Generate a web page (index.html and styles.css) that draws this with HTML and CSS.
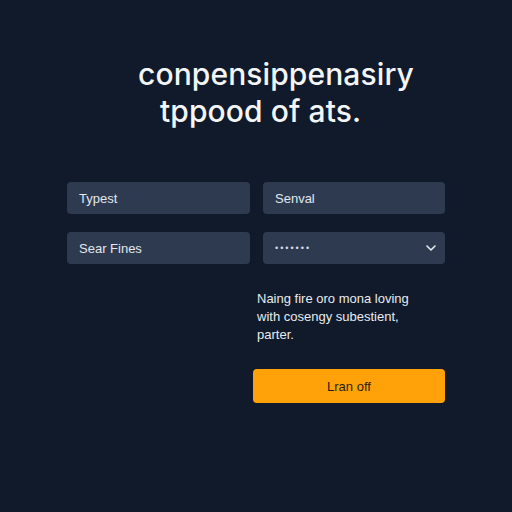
FILE: index.html
```html
<!DOCTYPE html>
<html lang="en">
<head>
  <meta charset="UTF-8" />
  <meta name="viewport" content="width=device-width, initial-scale=1" />
  <title>Sign up</title>
  <link rel="stylesheet" href="styles.css">
</head>
<body>
  <main class="page">
    <h1 class="title">
      <span class="title-line">conpensippenasiry</span>
      <span class="title-line second">tppood of ats.</span>
    </h1>

    <form class="fields">
      <div class="field">Typest</div>
      <div class="field">Senval</div>
      <div class="field">Sear Fines</div>
      <div class="field select">
        <span class="dots">•••••••</span>
        <svg class="chevron" width="10" height="6" viewBox="0 0 10 6">
          <path d="M1 1 L5 5 L9 1" fill="none" stroke="#e8ecf2" stroke-width="1.6" stroke-linecap="round" stroke-linejoin="round"/>
        </svg>
      </div>
    </form>

    <div class="aside">
      <p class="note">Naing fire oro mona loving with cosengy subestient, parter.</p>
      <button class="btn" type="button">Lran off</button>
    </div>
  </main>
</body>
</html>
```

FILE: styles.css
```css
body {
  margin: 0;
  background: #101a2a;
  font-family: "Liberation Sans", Arial, sans-serif;
  color: #e6e9ef;
}

.page {
  width: 512px;
  height: 512px;
  padding: 56px 67px 0;
  box-sizing: border-box;
}

.title {
  margin: 0;
  display: flex;
  flex-direction: column;
  font-family: Inter, "Open Sans", sans-serif;
  font-weight: 500;
  font-size: 30px;
  line-height: 37px;
  letter-spacing: 0.1px;
  color: #f4f5f7;
}

.title-line {
  padding-left: 71px;
}

.title-line.second {
  padding-left: 93px;
}

.fields {
  margin-top: 52px;
  display: grid;
  grid-template-columns: 183px 182px;
  column-gap: 13px;
  row-gap: 18px;
}

.field {
  height: 32px;
  display: flex;
  align-items: center;
  padding: 0 12px;
  background: #2d3a4f;
  border-radius: 4px;
  font-size: 13px;
  color: #e3e7ee;
}

.field.select {
  justify-content: space-between;
  padding-right: 9px;
}

.dots {
  font-size: 9px;
  letter-spacing: 2px;
  color: #d8dde6;
}

.aside {
  margin: 26px 0 0 186px;
  width: 192px;
}

.note {
  margin: 0 0 0 4px;
  width: 172px;
  font-size: 13px;
  line-height: 18px;
  color: #e9ebf0;
}

.btn {
  display: block;
  width: 192px;
  height: 34px;
  margin-top: 25px;
  border: 0;
  border-radius: 4px;
  background: #ffa20a;
  font-family: "Liberation Sans", Arial, sans-serif;
  font-size: 13px;
  color: #2a1c08;
}
```
